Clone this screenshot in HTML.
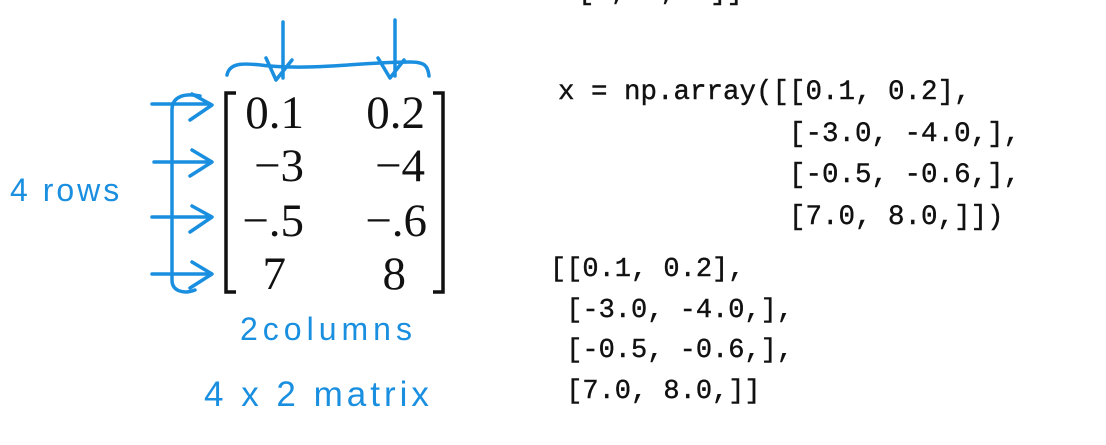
<!DOCTYPE html>
<html><head><meta charset="utf-8"><style>
body{margin:0;width:1106px;height:445px;background:#fff;overflow:hidden;position:relative}
.c{position:absolute;font-family:"Liberation Mono",monospace;font-size:27.5px;color:#111;white-space:pre;line-height:41.5px;-webkit-text-stroke:0.4px #111}
.n{position:absolute;font-family:"Liberation Serif",serif;font-size:47px;color:#111;line-height:46px;text-align:right;width:100px}
.h{position:absolute;font-family:"Liberation Sans",sans-serif;color:#1a8fe0;white-space:pre}
</style></head><body>
<div class="c" style="left:578px;top:-28px">[4, 5, 6]]</div>
<div class="c" style="left:558px;top:72px">x = np.array([[0.1, 0.2],
              [-3.0, -4.0,],
              [-0.5, -0.6,],
              [7.0, 8.0,]])</div>
<div class="c" style="left:550px;top:250px;line-height:40.5px;font-size:27px">[[0.1, 0.2],
 [-3.0, -4.0,],
 [-0.5, -0.6,],
 [7.0, 8.0,]]</div>
<svg style="position:absolute;left:0;top:0" width="460" height="445">
<g fill="none" stroke="#111" stroke-width="3.5"><path d="M236 93H226V292H236"/><path d="M433 93H443V292H433"/></g>
<g fill="none" stroke="#1a8fe0" stroke-width="3.5" stroke-linecap="round" stroke-linejoin="round">
<path d="M283 22V78M266 58L276 80L292 60"/><path d="M395 20V76M378 58L390 78L404 60"/>
<path d="M227 75C230 60 250 64 270 66C320 70 360 62 410 62C425 62 428 66 429 76"/>
<path d="M152 104H210M192 94L212 105L190 120"/><path d="M154 162H210M192 150L212 162L190 176"/>
<path d="M152 217H210M192 206L212 217L190 232"/><path d="M152 274H210M192 262L212 274L190 288"/>
<path d="M200 96C185 93 172 96 172 110V280C172 292 185 294 195 290"/>
</g></svg>
<div class="n" style="left:204px;top:90px">0.1</div>
<div class="n" style="left:325px;top:90px">0.2</div>
<div class="n" style="left:204px;top:143px">−3</div>
<div class="n" style="left:325px;top:143px">−4</div>
<div class="n" style="left:204px;top:198px">−.5</div>
<div class="n" style="left:327px;top:198px">−.6</div>
<div class="n" style="left:186px;top:251px">7</div>
<div class="n" style="left:306px;top:251px">8</div>
<div class="h" style="left:10px;top:172px;font-size:32px;letter-spacing:3px">4 rows</div>
<div class="h" style="left:240px;top:311px;font-size:32px;letter-spacing:5px">2columns</div>
<div class="h" style="left:204px;top:375px;font-size:35px;letter-spacing:4px">4 x 2 matrix</div>
</body></html>
